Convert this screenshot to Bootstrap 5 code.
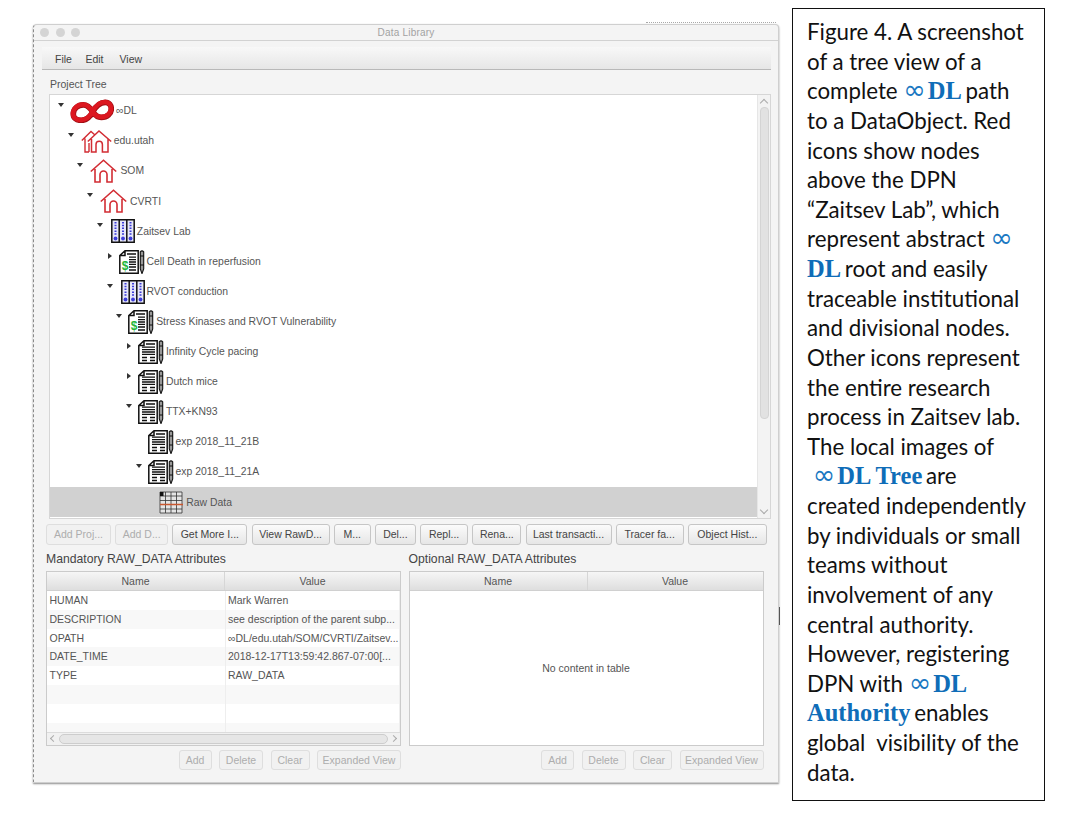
<!DOCTYPE html>
<html lang="en">
<head>
<meta charset="UTF-8">
<title>Figure 4</title>
<link href="https://cdn.jsdelivr.net/npm/bootstrap@5.3.3/dist/css/bootstrap.min.css" rel="stylesheet">
<style>
    body { background: #fff; margin: 0; font-family: "Liberation Sans", Arial, sans-serif; }
    .page-wrap { padding: 8px 0 0 33px; width: 1072px; height: 813px; overflow: hidden; }

    /* app window */
    .app-window { position: relative; width: 746px; height: 759px; margin-top: 16px; background: #f4f4f4; border: 1px solid #cfcfcf; border-left: 1px dashed #8a8a8a; border-radius: 4px 4px 0 0; box-shadow: 0 1px 2px rgba(0,0,0,.45); color: #555; font-size: 10.5px; }
    .app-window::before { content: ""; position: absolute; right: 2px; top: -3px; width: 130px; border-top: 1px dotted #a8a8a8; }
    .app-window::after { content: ""; position: absolute; right: -2px; top: 582px; height: 18px; border-right: 1px solid #555; }
    .title-strip { height: 16px; border-bottom: 1px solid #d2d2d2; position: relative; color: #a2a2a2; line-height: 16px; text-align: center; font-size: 10px; letter-spacing: .2px; }
    .lights { position: absolute; left: 6px; top: 3px; gap: 6.5px; }
    .lights i { display: block; width: 9px; height: 9px; border-radius: 50%; background: #d4d4d4; }
    .menu-strip { height: 23px; margin: 6px 7px 0 8px; background: linear-gradient(#f8f8f8, #e6e6e6); border-bottom: 1px solid #b8b8b8; padding-left: 13px; gap: 13.5px; line-height: 24px; color: #444; }
    .menu-strip span:last-child { margin-left: 2.5px; }
    .tree-label { height: 24px; padding: 4px 0 0 16px; line-height: 20px; }

    /* tree */
    .tree-box { margin-left: 15px; width: 722px; height: 425px; background: #fff; border: 1px solid #d6d6d6; }
    .tree-rows { flex: 1; min-width: 0; }
    .tree-row { height: 30.1px; color: #555; font-size: 10.4px; padding-top: 2px; }
    .tree-row.picked { background: #d1d1d1; margin-top: .6px; }
    .tri { width: 10px; height: 12px; flex: none; margin-bottom: 12px; display: flex; align-items: center; justify-content: center; }
    .tri-open::before { content: ""; border-left: 3.5px solid transparent; border-right: 3.5px solid transparent; border-top: 4.5px solid #333; }
    .tri-shut::before { content: ""; border-top: 3.5px solid transparent; border-bottom: 3.5px solid transparent; border-left: 4.5px solid #333; }
    .lvl0 { padding-left: 6px; } .lvl1 { padding-left: 15.7px; } .lvl2 { padding-left: 25.4px; }
    .lvl3 { padding-left: 35.1px; } .lvl4 { padding-left: 44.8px; } .lvl5 { padding-left: 54.5px; }
    .lvl6 { padding-left: 64.2px; } .lvl7 { padding-left: 73.9px; } .lvl8 { padding-left: 83.6px; }
    .lvl9 { padding-left: 93.3px; }
    .tree-row svg { margin-left: 4px; flex: none; }
    .tree-row svg.nudge-5 { margin-left: 5px; }
    .tree-row svg.nudge-6 { margin-left: 6px; }
    .tree-row span.node-name { margin-left: 2px; white-space: nowrap; }
    .tree-row span.node-gap { margin-left: 3px; }
    .tree-scroll { width: 13px; flex: none; background: #f3f3f3; border-left: 1px solid #e6e6e6; position: relative; }
    .tree-scroll .thumb { position: absolute; left: 2px; right: 1px; top: 12px; height: 312px; background: #e2e2e2; border: 1px solid #d4d4d4; border-radius: 4px; }
    .arrow-up, .arrow-down { position: absolute; left: 3px; width: 6px; height: 6px; border-left: 1px solid #aaa; border-top: 1px solid #aaa; }
    .arrow-up { top: 5px; transform: rotate(45deg); }
    .arrow-down { bottom: 5px; transform: rotate(225deg); }

    /* buttons */
    .mac-btn { --bs-btn-padding-x: 0; --bs-btn-padding-y: 0; --bs-btn-font-size: 10.5px; --bs-btn-line-height: 1; --bs-btn-border-radius: 3px; height: 21px; background: linear-gradient(#fbfbfb, #e6e6e6); border: 1px solid #c6c6c6; color: #444; white-space: nowrap; }
    .mac-btn.disabled { opacity: 1; background: #f1f1f1; border-color: #dedede; color: #adadad; }
    .action-bar { display: grid; grid-template-columns: 65px 53px 75px 78px 37px 41px 48px 49px 86px 68px 79px; column-gap: 4.2px; margin: 5px 0 0 12px; }
    .foot-bar { margin-top: 4px; gap: 7.5px; }
    .foot-bar .mac-btn { height: 19.5px; }
    .w-add { width: 33px; } .w-del { width: 44px; } .w-clr { width: 39px; } .w-exp { width: 84px; }

    /* attribute panes */
    .panes { margin: 5px 0 0 12px; gap: 7.5px; }
    .pane { width: 355px; }
    .pane-title { height: 21px; line-height: 19px; font-size: 12.2px; color: #444; }
    .grid-box { height: 175px; border: 1px solid #cbcbcb; background: #fff; }
    .grid-head { height: 19px; background: linear-gradient(#f6f6f6, #dedede); border-bottom: 1px solid #d0d0d0; line-height: 18px; text-align: center; flex: none; }
    .grid-head div:first-child { width: 178px; border-right: 1px solid #d6d6d6; }
    .grid-head div:last-child { flex: 1; }
    .attr-grid { table-layout: fixed; font-size: 10.5px; --bs-table-color: #555; --bs-table-bg: #fff; }
    .attr-grid td { height: 18.8px; padding: 0 2px 0 2.5px; line-height: 18px; white-space: nowrap; overflow: hidden; border-right: 1px solid #eee; }
    .attr-grid td:first-child { width: 178px; }
    .attr-grid tr:nth-child(even) td { background: #f8f8f8; }
    .grid-body { flex: 1; overflow: hidden; min-height: 0; }
    .h-scroll { height: 13px; flex: none; background: #f1f1f1; border-top: 1px solid #dcdcdc; padding: 0 12px; color: #999; position: relative; }
    .h-scroll .thumb { height: 10px; margin-top: 1px; background: #e6e6e6; border: 1px solid #cdcdcd; border-radius: 5px; }
    .arrow-left, .arrow-right { position: absolute; top: 3px; width: 5px; height: 5px; border-left: 1px solid #aaa; border-top: 1px solid #aaa; }
    .arrow-left { left: 4px; transform: rotate(-45deg); }
    .arrow-right { right: 4px; transform: rotate(135deg); }
    .empty-note { flex: 1; color: #555; padding-top: 1px; }

    /* caption */
    .caption-box { width: 253px; height: 793px; margin-left: 13px; flex: none; border: 1px solid #111; padding: 8px 0 0 14px; font-family: Lato, "Liberation Sans", sans-serif; font-size: 22.3px; line-height: 29.62px; color: #111; white-space: nowrap; }
    .dl-mark { color: #0f6db8; font-family: "Liberation Serif", serif; font-weight: 700; font-size: 24.5px; line-height: 0; margin-right: -2px; }
    .inf-mark { color: #1a78c2; font-family: "DejaVu Sans", sans-serif; font-size: 27px; font-weight: 400; line-height: 0; margin-right: 2px; }
</style>
</head>
<body>
<svg width="0" height="0" class="position-absolute">
    <defs>
        <symbol id="ic-inf" viewBox="0 0 44 24">
            <path d="M22.500 12.500C26 6 30 3 35 3C39 3 41 6 41 9.500C41 14 37 18 31 18C27 18 24.500 15.500 22.500 12.500C20 17 16 21 11 21C6 21 3 18.500 3 14.500C3 9.500 7.500 5.500 13 5.500C17 5.500 20 8.500 22.500 12.500Z" fill="none" stroke="#a00e14" stroke-width="5.600" transform="translate(.3 .4)"/>
            <path d="M22.500 12.500C26 6 30 3 35 3C39 3 41 6 41 9.500C41 14 37 18 31 18C27 18 24.500 15.500 22.500 12.500C20 17 16 21 11 21C6 21 3 18.500 3 14.500C3 9.500 7.500 5.500 13 5.500C17 5.500 20 8.500 22.500 12.500Z" fill="none" stroke="#dc1720" stroke-width="4.600"/>
        </symbol>
        <symbol id="ic-house" viewBox="0 0 27 24">
            <path d="M.8 12.500L13.500 1.200L26.200 12.500M5 10V23H10V15.500A3.500 3.500 0 0 1 17 15.500V23H22V10" fill="none" stroke="#d22c33" stroke-width="1.600"/>
        </symbol>
        <symbol id="ic-houses" viewBox="0 0 31 24">
            <path d="M.8 11.500L10 2.500L14 6M4 9.500V23H8M8 23V14" fill="none" stroke="#d22c33" stroke-width="1.400"/>
            <path d="M6.800 12.500L18 2L30.200 12.500M10.500 10V23H15V15.500A3.200 3.200 0 0 1 21.400 15.500V23H27V10" fill="none" stroke="#d22c33" stroke-width="1.500"/>
        </symbol>
        <symbol id="ic-rack" viewBox="0 0 24 24">
            <path d="M.8.800H23.200V23.200H.8ZM8.200.8V23.200M15.800.8V23.200" fill="#e6e7f8" stroke="#111" stroke-width="1.500"/>
            <path d="M4.500 3V16M12 3V16M19.500 3V16" stroke="#3c3cd8" stroke-width="2" stroke-dasharray="1.500 1.300"/>
            <circle cx="4.500" cy="19.500" r="1.900" fill="#3c3cd8"/><circle cx="12" cy="19.500" r="1.900" fill="#3c3cd8"/><circle cx="19.500" cy="19.500" r="1.900" fill="#3c3cd8"/>
        </symbol>
        <symbol id="ic-doc" viewBox="0 0 26 24">
            <path d="M6 .8H19.200V23.200H.8V5.500ZM6 .8V5.500H.8" fill="#fff" stroke="#111" stroke-width="1.500"/>
            <path d="M8 4H17M4 7.200H17M4 9.600H17M4 12H17M4 14.400H17M4 17.500H9M12 17.500H17M4 20.500H9M12 20.500H17" stroke="#111" stroke-width="1.300"/>
            <path d="M21.300 1.800Q23 0 24.700 1.800V19L23 23.600L21.300 19ZM21.300 6H24.700M21.300 15H24.700" fill="#999" stroke="#111" stroke-width="1.100"/>
        </symbol>
        <symbol id="ic-grant" viewBox="0 0 26 24">
            <path d="M6 .8H19.200V23.200H.8V5.500ZM6 .8V5.500H.8" fill="#fff" stroke="#111" stroke-width="1.500"/>
            <path d="M8 4H17M10 7.200H17M10 9.600H17M10 12H17M10 14.400H17M10 17H17M10 20H17" stroke="#111" stroke-width="1.300"/>
            <text x="2.800" y="19.500" font-family="Liberation Sans" font-weight="700" font-size="12" fill="#21b53a">$</text>
            <path d="M21.300 1.800Q23 0 24.700 1.800V19L23 23.600L21.300 19ZM21.300 6H24.700M21.300 15H24.700" fill="#999" stroke="#111" stroke-width="1.100"/>
        </symbol>
        <symbol id="ic-table" viewBox="0 0 24 23">
            <path d="M1 1H23V22H1ZM1 5H23M1 9.500H23M1 18H23M6.500 1V22M12 1V22M17.500 1V22" fill="#e4e4e4" stroke="#333" stroke-width=".8"/>
            <path d="M1 13.500H24" stroke="#c9572f" stroke-width="1.500"/>
            <rect x="1" y="1" width="3.500" height="4" fill="#111"/>
        </symbol>
    </defs>
</svg>

<div class="page-wrap d-flex align-items-start">
    <div class="app-window flex-none">
        <div class="title-strip">
            <div class="lights d-flex"><i></i><i></i><i></i></div>
            Data Library
        </div>
        <div class="menu-strip d-flex"><span>File</span><span>Edit</span><span>View</span></div>
        <div class="tree-label">Project Tree</div>

        <div class="tree-box d-flex">
            <div class="tree-rows">
                <div class="tree-row d-flex align-items-center lvl0"><span class="tri tri-open"></span><svg width="44" height="24"><use href="#ic-inf"/></svg><span class="node-name">∞DL</span></div>
                <div class="tree-row d-flex align-items-center lvl1"><span class="tri tri-open"></span><svg class="nudge-5" width="31" height="24"><use href="#ic-houses"/></svg><span class="node-name">edu.utah</span></div>
                <div class="tree-row d-flex align-items-center lvl2"><span class="tri tri-open"></span><svg class="nudge-5" width="27" height="24"><use href="#ic-house"/></svg><span class="node-name node-gap">SOM</span></div>
                <div class="tree-row d-flex align-items-center lvl3"><span class="tri tri-open"></span><svg class="nudge-5" width="27" height="24"><use href="#ic-house"/></svg><span class="node-name node-gap">CVRTI</span></div>
                <div class="tree-row d-flex align-items-center lvl4"><span class="tri tri-open"></span><svg class="nudge-6" width="24" height="24"><use href="#ic-rack"/></svg><span class="node-name">Zaitsev Lab</span></div>
                <div class="tree-row d-flex align-items-center lvl5"><span class="tri tri-shut"></span><svg width="26" height="24"><use href="#ic-grant"/></svg><span class="node-name">Cell Death in reperfusion</span></div>
                <div class="tree-row d-flex align-items-center lvl5"><span class="tri tri-open"></span><svg class="nudge-6" width="24" height="24"><use href="#ic-rack"/></svg><span class="node-name">RVOT conduction</span></div>
                <div class="tree-row d-flex align-items-center lvl6"><span class="tri tri-open"></span><svg width="26" height="24"><use href="#ic-grant"/></svg><span class="node-name">Stress Kinases and RVOT Vulnerability</span></div>
                <div class="tree-row d-flex align-items-center lvl7"><span class="tri tri-shut"></span><svg width="26" height="24"><use href="#ic-doc"/></svg><span class="node-name">Infinity Cycle pacing</span></div>
                <div class="tree-row d-flex align-items-center lvl7"><span class="tri tri-shut"></span><svg width="26" height="24"><use href="#ic-doc"/></svg><span class="node-name">Dutch mice</span></div>
                <div class="tree-row d-flex align-items-center lvl7"><span class="tri tri-open"></span><svg width="26" height="24"><use href="#ic-doc"/></svg><span class="node-name">TTX+KN93</span></div>
                <div class="tree-row d-flex align-items-center lvl8"><span class="tri"></span><svg width="26" height="24"><use href="#ic-doc"/></svg><span class="node-name">exp 2018_11_21B</span></div>
                <div class="tree-row d-flex align-items-center lvl8"><span class="tri tri-open"></span><svg width="26" height="24"><use href="#ic-doc"/></svg><span class="node-name">exp 2018_11_21A</span></div>
                <div class="tree-row picked d-flex align-items-center lvl9"><span class="tri"></span><svg class="nudge-6" width="24" height="23"><use href="#ic-table"/></svg><span class="node-name node-gap">Raw Data</span></div>
            </div>
            <div class="tree-scroll"><span class="arrow-up"></span><div class="thumb"></div><span class="arrow-down"></span></div>
        </div>

        <div class="action-bar">
            <button class="btn mac-btn disabled">Add Proj...</button>
            <button class="btn mac-btn disabled">Add D...</button>
            <button class="btn mac-btn">Get More I...</button>
            <button class="btn mac-btn">View RawD...</button>
            <button class="btn mac-btn">M...</button>
            <button class="btn mac-btn">Del...</button>
            <button class="btn mac-btn">Repl...</button>
            <button class="btn mac-btn">Rena...</button>
            <button class="btn mac-btn">Last transacti...</button>
            <button class="btn mac-btn">Tracer fa...</button>
            <button class="btn mac-btn">Object Hist...</button>
        </div>

        <div class="panes d-flex">
            <div class="pane">
                <div class="pane-title">Mandatory RAW_DATA Attributes</div>
                <div class="grid-box d-flex flex-column">
                    <div class="grid-head d-flex"><div>Name</div><div>Value</div></div>
                    <div class="grid-body">
                        <table class="table table-borderless mb-0 attr-grid">
                            <tbody>
                                <tr><td>HUMAN</td><td>Mark Warren</td></tr>
                                <tr><td>DESCRIPTION</td><td>see description of the parent subp...</td></tr>
                                <tr><td>OPATH</td><td>∞DL/edu.utah/SOM/CVRTI/Zaitsev...</td></tr>
                                <tr><td>DATE_TIME</td><td>2018-12-17T13:59:42.867-07:00[...</td></tr>
                                <tr><td>TYPE</td><td>RAW_DATA</td></tr>
                                <tr><td></td><td></td></tr>
                                <tr><td></td><td></td></tr>
                                <tr><td></td><td></td></tr>
                            </tbody>
                        </table>
                    </div>
                    <div class="h-scroll"><span class="arrow-left"></span><div class="thumb"></div><span class="arrow-right"></span></div>
                </div>
                <div class="foot-bar d-flex justify-content-end">
                    <button class="btn mac-btn disabled w-add">Add</button>
                    <button class="btn mac-btn disabled w-del">Delete</button>
                    <button class="btn mac-btn disabled w-clr">Clear</button>
                    <button class="btn mac-btn disabled w-exp">Expanded View</button>
                </div>
            </div>
            <div class="pane">
                <div class="pane-title">Optional RAW_DATA Attributes</div>
                <div class="grid-box d-flex flex-column">
                    <div class="grid-head d-flex"><div>Name</div><div>Value</div></div>
                    <div class="empty-note d-flex align-items-center justify-content-center">No content in table</div>
                </div>
                <div class="foot-bar d-flex justify-content-end">
                    <button class="btn mac-btn disabled w-add">Add</button>
                    <button class="btn mac-btn disabled w-del">Delete</button>
                    <button class="btn mac-btn disabled w-clr">Clear</button>
                    <button class="btn mac-btn disabled w-exp">Expanded View</button>
                </div>
            </div>
        </div>
    </div>

    <div class="caption-box">
        Figure 4. A screenshot<br>
        of a tree view of a<br>
        complete <span class="inf-mark">∞</span><span class="dl-mark">DL</span> path<br>
        to a DataObject. Red<br>
        icons show nodes<br>
        above the DPN<br>
        “Zaitsev Lab”, which<br>
        represent abstract <span class="inf-mark">∞</span><br>
        <span class="dl-mark">DL</span> root and easily<br>
        traceable institutional<br>
        and divisional nodes.<br>
        Other icons represent<br>
        the entire research<br>
        process in Zaitsev lab.<br>
        The local images of<br>
        &nbsp;<span class="inf-mark">∞</span><span class="dl-mark">DL Tree</span> are<br>
        created independently<br>
        by individuals or small<br>
        teams without<br>
        involvement of any<br>
        central authority.<br>
        However, registering<br>
        DPN with <span class="inf-mark">∞</span><span class="dl-mark">DL</span><br>
        <span class="dl-mark">Authority</span> enables<br>
        global &nbsp;visibility of the<br>
        data.
    </div>
</div>
<script src="https://cdn.jsdelivr.net/npm/bootstrap@5.3.3/dist/js/bootstrap.bundle.min.js"></script>
</body>
</html>
